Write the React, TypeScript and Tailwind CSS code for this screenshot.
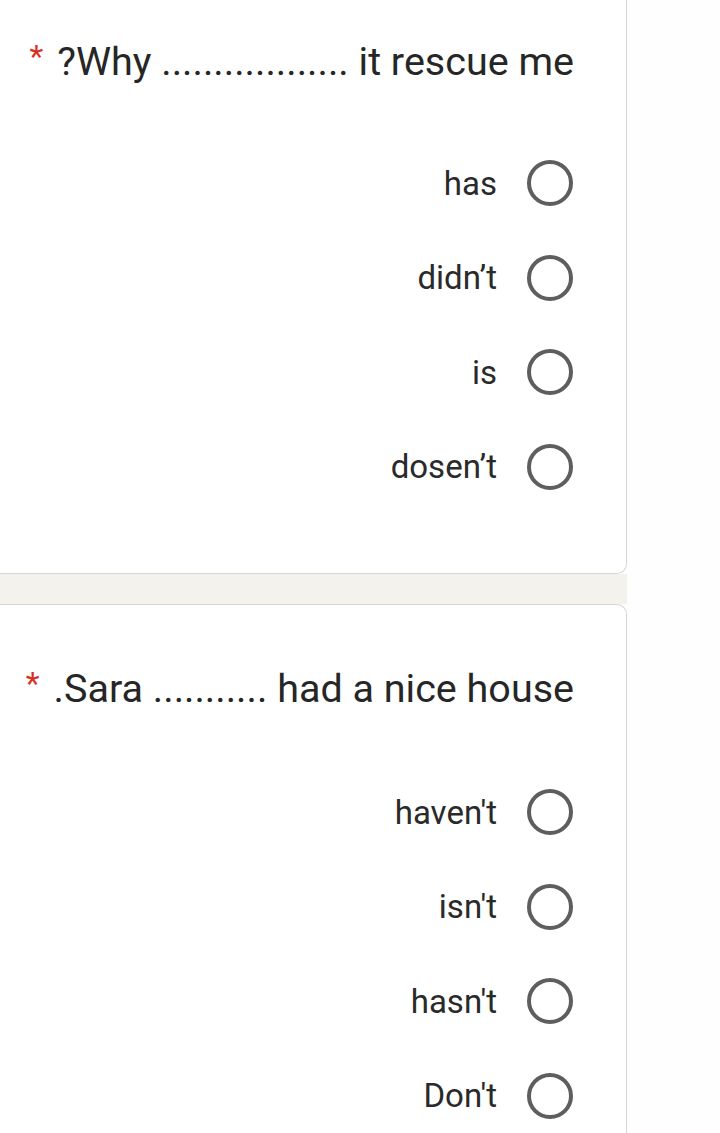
const font = { fontFamily: "Roboto, 'Liberation Sans', sans-serif" };

type Question = {
  text: string;
  options: string[];
};

const questions: Question[] = [
  {
    text: "?Why .................. it rescue me",
    options: ["has", "didn’t", "is", "dosen’t"],
  },
  {
    text: ".Sara ........... had a nice house",
    options: ["haven't", "isn't", "hasn't", "Don't"],
  },
];

function Radio() {
  return (
    <span className="block h-[46px] w-[46px] shrink-0 rounded-full border-[4px] border-[#5e5e5e]" />
  );
}

function Option({ label }: { label: string }) {
  return (
    <div className="flex h-[94.5px] items-center justify-end gap-[30px]">
      <span className="text-[33px] leading-none text-[#2a2a2a]">{label}</span>
      <Radio />
    </div>
  );
}

function QuestionBlock({ q }: { q: Question }) {
  return (
    <div className="flex h-[48px] items-center justify-end pr-[52px]">
      <span className="mr-[14px] -mt-[12px] text-[32px] leading-none text-[#d93025]">*</span>
      <span className="text-[39.5px] leading-none text-[#262626]">{q.text}</span>
    </div>
  );
}

export default function App() {
  return (
    <div className="flex h-[1133px] w-[720px] flex-col overflow-hidden bg-[#fefefe]" style={font}>
      <section className="flex h-[574px] w-[627px] shrink-0 flex-col rounded-br-[10px] border-r border-b border-[#d6d6d6] bg-white pt-[38px]">
        <QuestionBlock q={questions[0]} />
        <div className="mt-[50px] flex flex-col pr-[53px]">
          {questions[0].options.map((o) => (
            <Option key={o} label={o} />
          ))}
        </div>
      </section>
      <div className="h-[30px] w-[627px] shrink-0 bg-[#f4f2ec]" />
      <section className="flex w-[627px] flex-1 flex-col rounded-tr-[10px] border-t border-r border-[#d6d6d6] bg-white pt-[60px]">
        <QuestionBlock q={questions[1]} />
        <div className="mt-[52px] flex flex-col pr-[53px]">
          {questions[1].options.map((o) => (
            <Option key={o} label={o} />
          ))}
        </div>
      </section>
    </div>
  );
}
